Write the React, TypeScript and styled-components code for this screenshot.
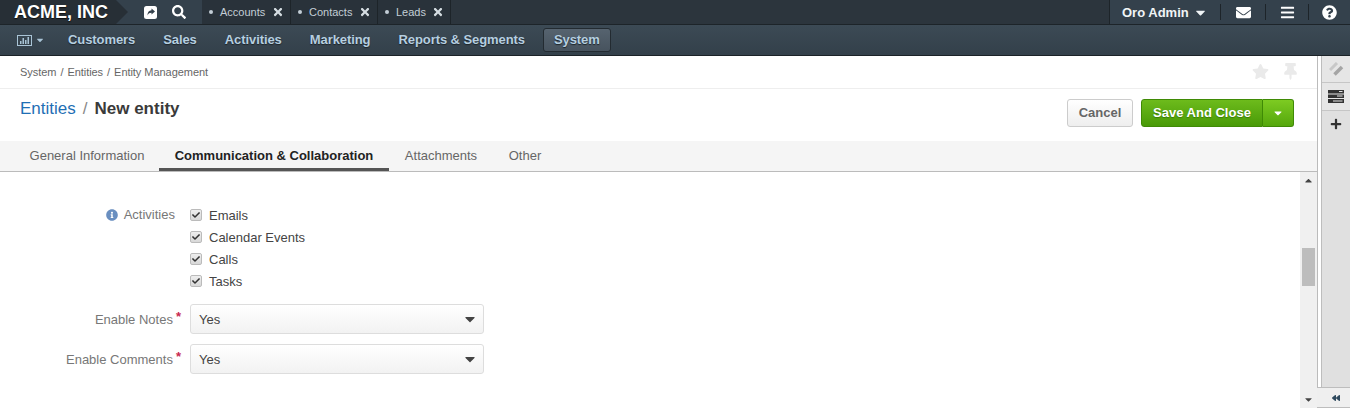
import React from 'react';
import styled, {createGlobalStyle} from 'styled-components';
import {FaCheck, FaEnvelope, FaInfoCircle, FaPlus, FaQuestionCircle, FaSearch, FaStar, FaThumbtack, FaTimes, FaBars, FaCaretDown, FaCaretUp, FaBackward} from 'react-icons/fa';

const GlobalStyle = createGlobalStyle`
    html, body {
        margin: 0;
        padding: 0;
        height: 100%;
        overflow: hidden;
        background: #fff;
        font-family: "Liberation Sans", Arial, sans-serif;
    }
    #root { height: 100%; }
`;

const Page = styled.div`
    width: 1350px;
    height: 408px;
    display: flex;
    flex-direction: column;
    overflow: hidden;
`;

const TopBar = styled.header`
    height: 24px;
    flex: none;
    display: flex;
    background: #2c353d;
    border-bottom: 1px solid #1d2429;
`;

const Logo = styled.div`
    width: 116px;
    padding-left: 14px;
    box-sizing: border-box;
    background: #272f36;
    color: #fff;
    font-size: 18px;
    font-weight: bold;
    line-height: 24px;
    white-space: nowrap;
    text-shadow: 0 1px 1px #111;
`;

const LogoArrow = styled.div`
    width: 0;
    height: 0;
    border-top: 12px solid transparent;
    border-bottom: 12px solid transparent;
    border-left: 12px solid #272f36;
    background: #34414c;
`;

const Quick = styled.div`
    width: 74px;
    display: flex;
    align-items: center;
    gap: 15px;
    padding-left: 16px;
    box-sizing: border-box;
    background: #34414c;
    color: #fff;
    font-size: 14px;
`;

const Tab = styled.div<{$w: number}>`
    width: ${p => p.$w}px;
    box-sizing: border-box;
    display: flex;
    align-items: center;
    padding-left: 7px;
    color: #c3ced6;
    font-size: 11px;
    border-right: 1px solid #1d2429;
    background: #29323a;
`;

const Dot = styled.span`
    width: 4px;
    height: 4px;
    border-radius: 50%;
    background: #c3ced6;
    margin-right: 7px;
`;

const TabClose = styled.span`
    margin-left: auto;
    margin-right: 6px;
    display: flex;
    color: #d5dde2;
    font-size: 12px;
`;

const UserArea = styled.div`
    margin-left: auto;
    width: 241px;
    display: flex;
    align-items: center;
    box-sizing: border-box;
    background: #34414c;
    border-left: 1px solid #1d2429;
    color: #fff;
`;

const UserName = styled.div`
    width: 110px;
    box-sizing: border-box;
    padding-left: 12px;
    display: flex;
    align-items: center;
    gap: 4px;
    font-size: 13px;
    font-weight: bold;
    color: #f0f4f6;
    svg { font-size: 15px; }
`;

const UserIcon = styled.div<{$w: number}>`
    width: ${p => p.$w}px;
    height: 16px;
    box-sizing: border-box;
    display: flex;
    justify-content: center;
    align-items: center;
    font-size: 15px;
    border-left: 1px solid #1d2429;
`;

const MenuBar = styled.nav`
    height: 30px;
    flex: none;
    display: flex;
    align-items: center;
    background: linear-gradient(#3c4a55, #33404a);
    border-bottom: 1px solid #1b2227;
`;

const ChartToggle = styled.div`
    width: 54px;
    box-sizing: border-box;
    padding-left: 17px;
    display: flex;
    align-items: center;
    gap: 3px;
    color: #a9c4d6;
    font-size: 10px;
`;

const MenuItem = styled.div<{$active?: boolean}>`
    height: 24px;
    line-height: 24px;
    padding: 0 11px;
    margin: 0 3px;
    box-sizing: border-box;
    border-radius: 3px;
    color: #b6cfe0;
    font-size: 13px;
    font-weight: bold;
    letter-spacing: -0.08px;
    white-space: nowrap;
    text-shadow: 0 1px 1px #1d2429;
    ${p => p.$active && `
        background: linear-gradient(#56636f, #47535e);
        border: 1px solid #232b31;
        line-height: 22px;
        margin-left: 4px;
        padding: 0 10px;
    `}
`;

const Body = styled.div`
    flex: 1;
    display: flex;
    min-height: 0;
`;

const Main = styled.main`
    flex: 1;
    min-width: 0;
    display: flex;
    flex-direction: column;
    border-right: 1px solid #bbb;
`;

const BreadcrumbRow = styled.div`
    height: 33px;
    flex: none;
    box-sizing: border-box;
    display: flex;
    align-items: center;
    padding: 0 18px 0 20px;
    border-bottom: 1px solid #eee;
    color: #666;
    font-size: 11px;
    letter-spacing: -0.05px;
`;

const CrumbSep = styled.span`
    margin: 0 4px;
`;

const PageActions = styled.div`
    margin-left: auto;
    margin-top: -2px;
    display: flex;
    gap: 13px;
    color: #eaeaea;
    font-size: 17px;
`;

const TitleRow = styled.div`
    height: 52px;
    flex: none;
    display: flex;
    align-items: flex-start;
    padding: 10px 23px 0 20px;
    box-sizing: border-box;
`;

const Title = styled.div`
    font-size: 17px;
    line-height: 20px;
    white-space: nowrap;
`;

const TitleLink = styled.span`
    color: #1f6fb5;
`;

const TitleSep = styled.span`
    color: #888;
    margin: 0 7px;
`;

const TitleName = styled.span`
    color: #3a3a3a;
    font-weight: bold;
`;

const Actions = styled.div`
    margin-left: auto;
    display: flex;
`;

const CancelButton = styled.div`
    width: 66px;
    height: 28px;
    box-sizing: border-box;
    text-align: center;
    line-height: 26px;
    border: 1px solid #ccc;
    border-radius: 3px;
    background: linear-gradient(#fff, #eee);
    color: #666;
    font-size: 13px;
    font-weight: bold;
    margin-right: 8px;
`;

const SaveButton = styled.div`
    width: 122px;
    height: 28px;
    box-sizing: border-box;
    text-align: center;
    line-height: 26px;
    border: 1px solid #3f8a05;
    border-radius: 3px 0 0 3px;
    background: linear-gradient(#6dbb1c, #499a07);
    color: #fff;
    font-size: 13px;
    font-weight: bold;
    text-shadow: 0 1px 1px #3a7a06;
`;

const SaveCaret = styled.div`
    width: 31px;
    height: 28px;
    box-sizing: border-box;
    display: flex;
    align-items: center;
    justify-content: center;
    border: 1px solid #3f8a05;
    border-left: none;
    border-radius: 0 3px 3px 0;
    background: linear-gradient(#7dcb22, #55a70c);
    color: #fff;
    font-size: 12px;
`;

const TabsBar = styled.div`
    height: 31px;
    flex: none;
    box-sizing: border-box;
    display: flex;
    background: #f5f5f5;
    border-bottom: 1px solid #bbb;
    padding-left: 15px;
`;

const SectionTab = styled.div<{$w: number; $active?: boolean}>`
    width: ${p => p.$w}px;
    text-align: center;
    line-height: 29px;
    height: 30px;
    box-sizing: border-box;
    font-size: 13px;
    white-space: nowrap;
    color: ${p => (p.$active ? '#222' : '#666')};
    font-weight: ${p => (p.$active ? 'bold' : 'normal')};
    border-bottom: ${p => (p.$active ? '3px solid #555' : 'none')};
`;

const Content = styled.div`
    flex: 1;
    min-height: 0;
    display: flex;
`;

const Form = styled.div`
    flex: 1;
    padding-top: 32px;
    display: flex;
    flex-direction: column;
`;

const Row = styled.div<{$mb?: number}>`
    display: flex;
    margin-bottom: ${p => p.$mb ?? 0}px;
`;

const LabelCell = styled.div<{$top?: number}>`
    width: 190px;
    flex: none;
    box-sizing: border-box;
    padding-right: 15px;
    padding-top: ${p => p.$top ?? 0}px;
    display: flex;
    justify-content: flex-end;
    align-items: flex-start;
    color: #777;
    font-size: 13px;
    line-height: 16px;
`;

const InfoIcon = styled.span`
    display: inline-flex;
    align-items: center;
    height: 16px;
    color: #6a8fc0;
    font-size: 12px;
    margin-right: 6px;
`;

const Star = styled.span`
    color: #c8294f;
    font-size: 13px;
    font-weight: bold;
    margin-left: 3px;
    margin-right: -6px;
    line-height: 10px;
`;

const Checks = styled.div`
    display: flex;
    flex-direction: column;
`;

const CheckRow = styled.div`
    height: 22px;
    display: flex;
    align-items: center;
    gap: 7px;
    color: #444;
    font-size: 13px;
`;

const CheckBox = styled.span`
    width: 12px;
    height: 12px;
    box-sizing: border-box;
    display: flex;
    align-items: center;
    justify-content: center;
    border: 1px solid #bbb;
    border-radius: 2px;
    background: linear-gradient(#eee, #d8d8d8);
    color: #333;
    font-size: 8px;
`;

const Select = styled.div`
    width: 294px;
    height: 30px;
    box-sizing: border-box;
    display: flex;
    align-items: center;
    padding: 0 5px 0 8px;
    border: 1px solid #ddd;
    border-radius: 3px;
    background: linear-gradient(#fff, #f2f2f2);
    color: #444;
    font-size: 13px;
`;

const SelectCaret = styled.span`
    margin-left: auto;
    display: flex;
    color: #444;
    font-size: 16px;
`;

const ScrollTrack = styled.div`
    width: 17px;
    flex: none;
    display: flex;
    flex-direction: column;
    align-items: center;
    justify-content: space-between;
    position: relative;
    background: #f0f0f0;
    color: #444;
    font-size: 11px;
`;

const ScrollArrow = styled.span`
    display: flex;
    height: 17px;
    align-items: center;
`;

const ScrollThumb = styled.div`
    position: absolute;
    top: 76px;
    left: 2px;
    width: 13px;
    height: 38px;
    background: #bdbdbd;
`;

const SideBar = styled.aside`
    width: 29px;
    flex: none;
    display: flex;
    flex-direction: column;
    box-sizing: border-box;
    background: #e0e0e0;
    border-left: 1px solid #bdbdbd;
    margin-left: 3px;
`;

const SideButton = styled.div<{$h: number; $color?: string; $last?: boolean}>`
    height: ${p => p.$h}px;
    flex: none;
    box-sizing: border-box;
    display: flex;
    align-items: center;
    justify-content: center;
    background: ${p => (p.$last ? 'transparent' : '#e6e6e6')};
    border-bottom: ${p => (p.$last ? 'none' : '1px solid #c6c6c6')};
    color: ${p => p.$color ?? '#333'};
    font-size: 12px;
`;

const SideFoot = styled.div`
    margin-top: auto;
    margin-left: -5px;
    height: 21px;
    box-sizing: border-box;
    padding-left: 5px;
    display: flex;
    align-items: center;
    justify-content: center;
    background: #efefef;
    border-top: 1px solid #bdbdbd;
    border-bottom: 1px solid #bdbdbd;
    color: #2f4a5e;
    font-size: 8px;
`;

const App = () => (
    <React.Fragment>
        <GlobalStyle />
        <Page>
            <TopBar>
                <Logo>ACME, INC</Logo>
                <LogoArrow />
                <Quick>
                    <svg width="13" height="13" viewBox="0 0 13 13">
                        <rect width="13" height="13" rx="2.5" fill="#fff" />
                        <path d="M7.500 2.500L11 5.500 7.500 8.500V6.800C5.500 6.800 4.300 7.500 3.500 9.500 3.300 6.300 4.800 4.400 7.500 4.200z" fill="#34414c" />
                    </svg>
                    <FaSearch />
                </Quick>
                <Tab $w={89}><Dot />Accounts<TabClose><FaTimes /></TabClose></Tab>
                <Tab $w={87}><Dot />Contacts<TabClose><FaTimes /></TabClose></Tab>
                <Tab $w={73}><Dot />Leads<TabClose><FaTimes /></TabClose></Tab>
                <UserArea>
                    <UserName>Oro Admin<FaCaretDown /></UserName>
                    <UserIcon $w={45}><FaEnvelope /></UserIcon>
                    <UserIcon $w={43}><FaBars /></UserIcon>
                    <UserIcon $w={42}><FaQuestionCircle /></UserIcon>
                </UserArea>
            </TopBar>
            <MenuBar>
                <ChartToggle>
                    <svg width="15" height="11" viewBox="0 0 15 11">
                        <rect x="0.5" y="0.5" width="14" height="10" fill="none" stroke="currentColor" />
                        <path d="M3 9V6h1.500v3zM5.500 9V3H7v6zM8 9V5h1.500v4zM10.500 9V2H12v7z" fill="currentColor" />
                    </svg>
                    <FaCaretDown />
                </ChartToggle>
                <MenuItem>Customers</MenuItem>
                <MenuItem>Sales</MenuItem>
                <MenuItem>Activities</MenuItem>
                <MenuItem>Marketing</MenuItem>
                <MenuItem>Reports &amp; Segments</MenuItem>
                <MenuItem $active>System</MenuItem>
            </MenuBar>
            <Body>
                <Main>
                    <BreadcrumbRow>
                        System<CrumbSep>/</CrumbSep>Entities<CrumbSep>/</CrumbSep>Entity Management
                        <PageActions>
                            <FaStar />
                            <FaThumbtack />
                        </PageActions>
                    </BreadcrumbRow>
                    <TitleRow>
                        <Title>
                            <TitleLink>Entities</TitleLink>
                            <TitleSep>/</TitleSep>
                            <TitleName>New entity</TitleName>
                        </Title>
                        <Actions>
                            <CancelButton>Cancel</CancelButton>
                            <SaveButton>Save And Close</SaveButton>
                            <SaveCaret><FaCaretDown /></SaveCaret>
                        </Actions>
                    </TitleRow>
                    <TabsBar>
                        <SectionTab $w={144}>General Information</SectionTab>
                        <SectionTab $w={230} $active>Communication &amp; Collaboration</SectionTab>
                        <SectionTab $w={104}>Attachments</SectionTab>
                        <SectionTab $w={64}>Other</SectionTab>
                    </TabsBar>
                    <Content>
                        <Form>
                            <Row $mb={12}>
                                <LabelCell $top={3}>
                                    <InfoIcon><FaInfoCircle /></InfoIcon>Activities
                                </LabelCell>
                                <Checks>
                                    {['Emails', 'Calendar Events', 'Calls', 'Tasks'].map(name => (
                                        <CheckRow key={name}>
                                            <CheckBox><FaCheck /></CheckBox>
                                            {name}
                                        </CheckRow>
                                    ))}
                                </Checks>
                            </Row>
                            <Row $mb={10}>
                                <LabelCell $top={8}>Enable Notes<Star>*</Star></LabelCell>
                                <Select>Yes<SelectCaret><FaCaretDown /></SelectCaret></Select>
                            </Row>
                            <Row>
                                <LabelCell $top={8}>Enable Comments<Star>*</Star></LabelCell>
                                <Select>Yes<SelectCaret><FaCaretDown /></SelectCaret></Select>
                            </Row>
                        </Form>
                        <ScrollTrack>
                            <ScrollArrow><FaCaretUp /></ScrollArrow>
                            <ScrollThumb />
                            <ScrollArrow><FaCaretDown /></ScrollArrow>
                        </ScrollTrack>
                    </Content>
                </Main>
                <SideBar>
                    <SideButton $h={27} $color="#a5a5a5">
                        <svg width="15" height="14" viewBox="0 0 15 14">
                            <path d="M1 8L8 1" stroke="#c8c8c8" strokeWidth="3" />
                            <path d="M5.500 12.500L13 5" stroke="currentColor" strokeWidth="3.5" />
                        </svg>
                    </SideButton>
                    <SideButton $h={28}>
                        <svg width="16" height="13" viewBox="0 0 16 13">
                            <path d="M0 0h16v3.500H0zM0 4.500h16V8H0zM0 9h16v4H0z" fill="currentColor" />
                            <path d="M11 1h3.500v1H11zM9 5.500h5.500v1H9zM5 10.500h9.500v1H5z" fill="#e6e6e6" />
                        </svg>
                    </SideButton>
                    <SideButton $h={26} $last><FaPlus /></SideButton>
                    <SideFoot><FaBackward /></SideFoot>
                </SideBar>
            </Body>
        </Page>
    </React.Fragment>
);

export default App;
